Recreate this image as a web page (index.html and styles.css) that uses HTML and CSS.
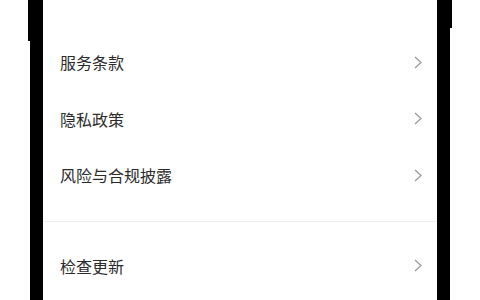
FILE: index.html
```html
<!DOCTYPE html>
<html lang="zh-CN">
<head>
    <meta charset="UTF-8">
    <meta name="viewport" content="width=device-width, initial-scale=1.0">
    <title>关于</title>
    <link rel="stylesheet" href="styles.css">
</head>
<body>
    <div class="phone">
        <div class="screen">
            <div class="group group-first">
                <div class="row"><span class="label">服务条款</span><span class="chevron"><svg width="8" height="13" viewBox="0 0 8 13"><path d="M1 1l6 5.5L1 12" fill="none" stroke="#9a9a9a" stroke-width="1.3"/></svg></span></div>
                <div class="row"><span class="label">隐私政策</span><span class="chevron"><svg width="8" height="13" viewBox="0 0 8 13"><path d="M1 1l6 5.5L1 12" fill="none" stroke="#9a9a9a" stroke-width="1.3"/></svg></span></div>
                <div class="row"><span class="label">风险与合规披露</span><span class="chevron"><svg width="8" height="13" viewBox="0 0 8 13"><path d="M1 1l6 5.5L1 12" fill="none" stroke="#9a9a9a" stroke-width="1.3"/></svg></span></div>
            </div>
            <div class="divider"></div>
            <div class="group group-second">
                <div class="row"><span class="label">检查更新</span><span class="chevron"><svg width="8" height="13" viewBox="0 0 8 13"><path d="M1 1l6 5.5L1 12" fill="none" stroke="#9a9a9a" stroke-width="1.3"/></svg></span></div>
            </div>
        </div>
    </div>
</body>
</html>
```

FILE: styles.css
```css
:root {
    --frame: #000;
    --text-color: #2b2b2b;
    --line-color: #eeeeee;
}

html, body {
    margin: 0;
    height: 100%;
    background: #fff;
    overflow: hidden;
}

body {
    font-family: "Noto Sans CJK SC", "Noto Sans", sans-serif;
    color: var(--text-color);
}

/* phone frame */
.phone {
    position: relative;
    margin-left: 30px;
    width: 420px;
    height: 100%;
    box-sizing: border-box;
    border-left: 13px solid var(--frame);
    border-right: 13px solid var(--frame);
}

.phone::before,
.phone::after {
    content: "";
    position: absolute;
    top: 0;
    width: 2px;
    background: var(--frame);
}

.phone::before {
    left: -15px;
    height: 41px;
}

.phone::after {
    right: -15px;
    height: 28px;
}

.screen {
    background: #fff;
    height: 100%;
}

.group-first {
    padding: 34px 0 17px;
}

.group-second {
    padding-top: 16px;
}

.row {
    display: flex;
    align-items: center;
    justify-content: space-between;
    height: 56.5px;
    padding: 0 15px 0 17px;
    font-size: 16px;
}

.label {
    line-height: 1;
}

.chevron {
    display: flex;
}

.divider {
    height: 1px;
    background: var(--line-color);
}
```
